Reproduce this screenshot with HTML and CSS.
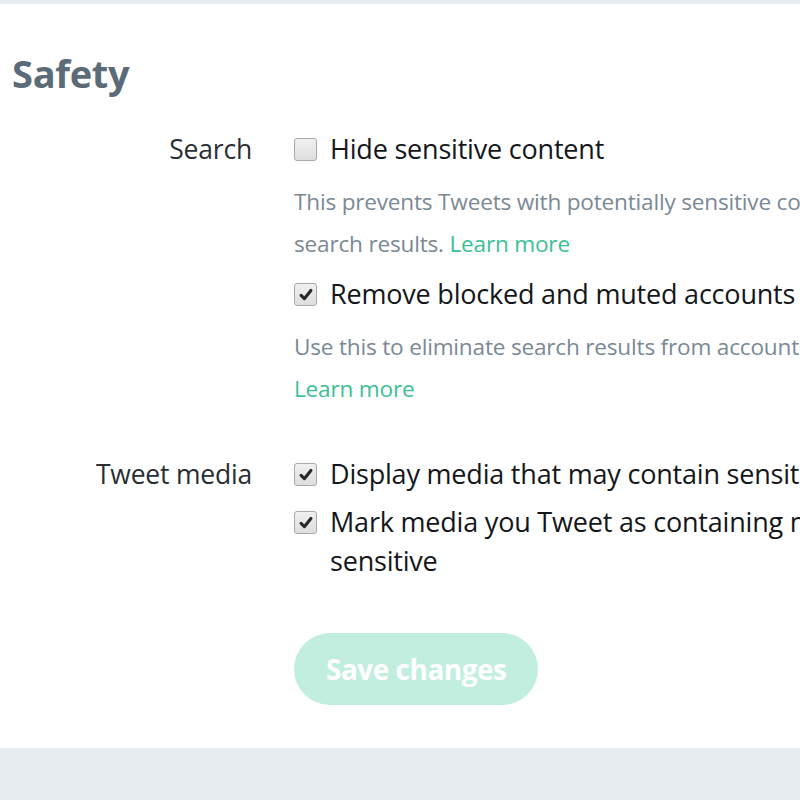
FILE: index.html
```html
<!DOCTYPE html>
<html>
<head>
<meta charset="utf-8">
<link rel="stylesheet" href="styles.css">
</head>
<body>
<div class="page">
  <div class="topbar"></div>
  <div class="card">
    <h2 class="title">Safety</h2>
    <div class="group">
      <div class="label">Search</div>
      <div class="options">
        <div class="opt">
          <span class="box"></span>
          <span class="opt-text">Hide sensitive content</span>
        </div>
        <p class="desc">This prevents Tweets with potentially sensitive content from appearing in your<br>search results. <a class="link">Learn more</a></p>
        <div class="opt">
          <span class="box"><svg viewBox="0 0 22 22" width="22" height="22"><path d="M5 11.5 L9 15.5 L17 5.5" fill="none" stroke="#2a2a2a" stroke-width="3.8" stroke-linecap="round" stroke-linejoin="round"/></svg></span>
          <span class="opt-text">Remove blocked and muted accounts</span>
        </div>
        <p class="desc">Use this to eliminate search results from accounts you've blocked or muted.<br><a class="link">Learn more</a></p>
      </div>
    </div>
    <div class="group media">
      <div class="label">Tweet media</div>
      <div class="options">
        <div class="opt tight">
          <span class="box"><svg viewBox="0 0 22 22" width="22" height="22"><path d="M5 11.5 L9 15.5 L17 5.5" fill="none" stroke="#2a2a2a" stroke-width="3.8" stroke-linecap="round" stroke-linejoin="round"/></svg></span>
          <span class="opt-text">Display media that may contain sensitive content</span>
        </div>
        <div class="opt tight">
          <span class="box"><svg viewBox="0 0 22 22" width="22" height="22"><path d="M5 11.5 L9 15.5 L17 5.5" fill="none" stroke="#2a2a2a" stroke-width="3.8" stroke-linecap="round" stroke-linejoin="round"/></svg></span>
          <span class="opt-text">Mark media you Tweet as containing material that may be<br>sensitive</span>
        </div>
      </div>
    </div>
    <div class="actions">
      <button class="save">Save changes</button>
    </div>
  </div>
  <div class="footer"></div>
</div>
</body>
</html>
```

FILE: styles.css
```css
html, body {
  margin: 0;
  padding: 0;
  background: #fff;
}
.page {
  width: 800px;
  height: 800px;
  overflow: hidden;
  display: flex;
  flex-direction: column;
  font-family: "Open Sans", "Noto Sans", sans-serif;
  color: #14171a;
}
.topbar {
  height: 4px;
  background: #e9edf0;
  flex: none;
}
.card {
  flex: 1;
  width: 1200px;
  padding: 0 0 0 12px;
}
.title {
  margin: 43px 0 0 0;
  font-size: 38px;
  font-weight: 700;
  color: #5b6b78;
  line-height: 52px;
  letter-spacing: -0.3px;
}
.group {
  display: flex;
  margin-top: 30px;
}
.group.media {
  margin-top: 35px;
}
.label {
  width: 240px;
  flex: none;
  text-align: right;
  font-size: 26.5px;
  line-height: 40px;
  color: #292f33;
  letter-spacing: -0.2px;
}
.options {
  padding-left: 42px;
}
.opt {
  display: flex;
  align-items: flex-start;
  font-size: 27px;
  line-height: 40px;
  white-space: nowrap;
}
.opt.tight {
  line-height: 39px;
  margin-bottom: 9px;
}
.box {
  flex: none;
  width: 21px;
  height: 21px;
  margin-top: 9px;
  margin-right: 13px;
  border: 1px solid #a9a9a9;
  border-radius: 3px;
  background: linear-gradient(#f0f0f0, #dedede);
  display: flex;
  align-items: center;
  justify-content: center;
}
.box svg {
  width: 18px;
  height: 18px;
}
.opt-text {
  letter-spacing: -0.2px;
}
.desc {
  margin: 12px 0 9px 0;
  font-size: 22.6px;
  line-height: 42px;
  color: #7b8994;
  white-space: nowrap;
  letter-spacing: -0.2px;
}
.link {
  color: #3cbf94;
  text-decoration: none;
}
.actions {
  padding-left: 282px;
  margin-top: 44px;
}
.save {
  height: 72px;
  padding: 0 32px;
  border: none;
  border-radius: 36px;
  background: #c2eee0;
  color: #fff;
  font-family: "Open Sans", "Noto Sans", sans-serif;
  font-size: 28px;
  font-weight: 700;
  letter-spacing: -0.5px;
}
.footer {
  height: 52px;
  flex: none;
  background: #e6ecf0;
}
```
